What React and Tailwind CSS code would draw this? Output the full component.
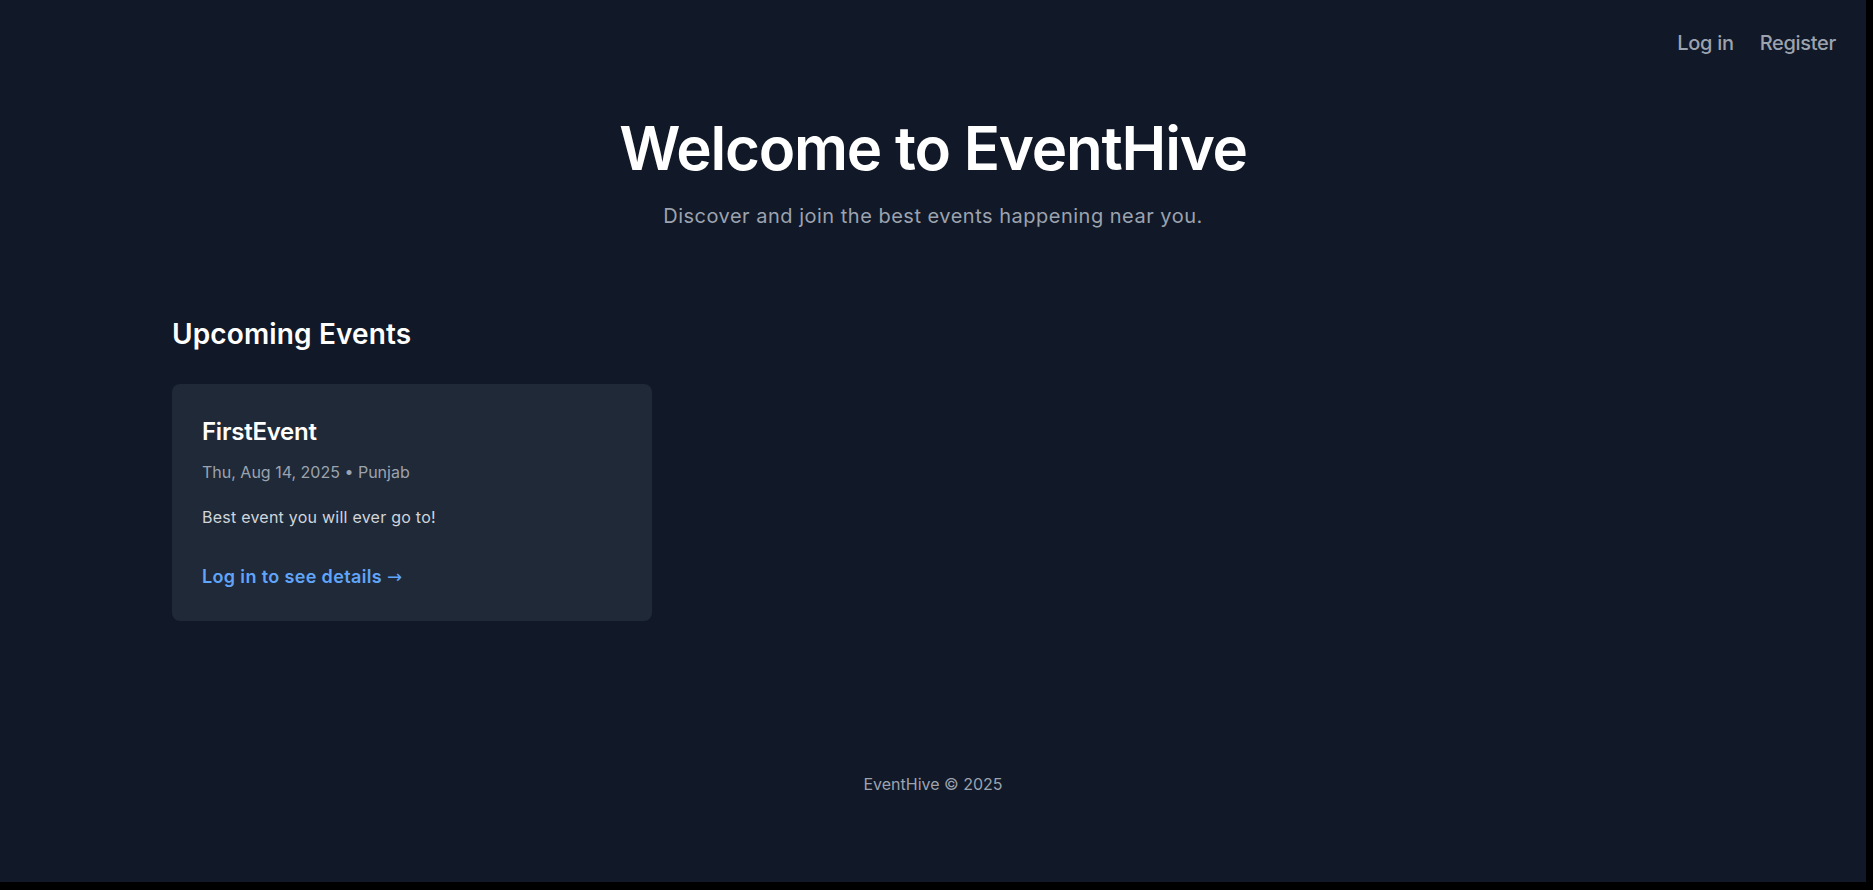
export default function App() {
  return (
    <div className="min-h-[890px] bg-black">
      <div className="w-[1866px] h-[882px] bg-[#111827] flex flex-col font-['Inter',sans-serif]">
        {/* top nav */}
        <header className="flex justify-end gap-[26px] pr-[30px] pt-[29px]">
          <a href="#" className="text-xl leading-7 font-medium tracking-[-0.015em] text-[#9ca3af]">Log in</a>
          <a href="#" className="text-xl leading-7 font-medium tracking-[-0.015em] text-[#9ca3af]">Register</a>
        </header>

        <main className="flex-1">
          {/* hero */}
          <section className="text-center pt-[61px]">
            <h1 className="text-6xl leading-none font-semibold tracking-[-0.02em] text-white">Welcome to EventHive</h1>
            <p className="mt-6 text-xl leading-7 tracking-[0.025em] text-[#9ca3af]">
              Discover and join the best events happening near you.
            </p>
          </section>

          {/* events */}
          <section className="px-[172px] mt-[86px]">
            <h2 className="text-[28px] leading-9 font-semibold tracking-[0.005em] text-white">Upcoming Events</h2>
            <div className="mt-8 grid grid-cols-[480px] gap-6">
              <div className="bg-[#1f2937] rounded-lg p-8 pl-[30px] pb-[30px]">
                <h3 className="text-2xl font-semibold tracking-[-0.01em] text-white">FirstEvent</h3>
                <p className="mt-3 text-base text-[#9ca3af]">Thu, Aug 14, 2025 • Punjab</p>
                <p className="mt-[21px] text-base tracking-[0.015em] text-[#d1d5db]">Best event you will ever go to!</p>
                <a href="#" className="block mt-[34px] text-lg font-semibold tracking-[0.02em] text-[#60a5fa]">
                  Log in to see details <span className="font-['DejaVu_Sans',sans-serif] font-normal">→</span>
                </a>
              </div>
            </div>
          </section>
        </main>

        <footer className="text-center pb-[86px] text-base text-[#9ca3af]">EventHive © 2025</footer>
      </div>
    </div>
  )
}
